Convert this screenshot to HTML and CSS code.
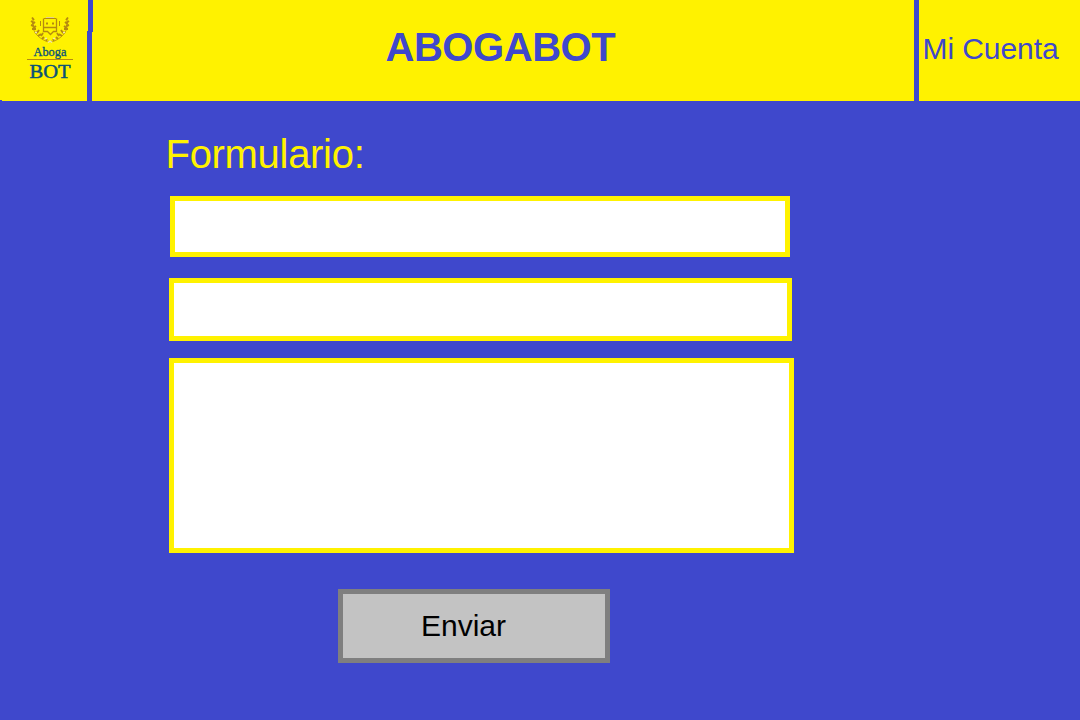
FILE: index.html
```html
<!DOCTYPE html>
<html lang="es">
<head>
<meta charset="utf-8">
<title>Abogabot</title>
<link rel="stylesheet" href="styles.css">
</head>
<body>
<header class="header">
  <a class="brand">
    <svg class="logo" width="50" height="68" viewBox="25 14 50 68">
      <g fill="none" stroke="#b58a10" stroke-width="1">
        <path d="M43.500 18.500V31.500H47.500L50.500 34.500L53.500 31.500H56.500V18.500M43.500 27.500H56.500" stroke-width="1.300"/>
        <path d="M40.500 21V26M59.500 21V26"/>
        <path d="M44 18.500H56"/>
        <path d="M46 17.500H54" stroke="#e2cf90"/>
        <path d="M46 23.500H48M52 23.500H54" stroke-width="1.800"/>
        <path d="M33 19Q31 31 39 37T49 41M67 19Q69 31 61 37T51 41" opacity=".75"/>
        <path d="M32 17.500L34 20M31 21L34 23M31 25L34 26M32 29L36 29M35 33L38 32M38 36L41 34M42 39L44 37M46 41L47 39M35 22L32.500 24M36 26L33.500 28M39 30L37 33M43 33L41 36M68 17.500L66 20M69 21L66 23M69 25L66 26M68 29L64 29M65 33L62 32M62 36L59 34M58 39L56 37M54 41L53 39M65 22L67.500 24M64 26L66.500 28M61 30L63 33M57 33L59 36" stroke-width="1.900"/>
        <path d="M48 42.500L50 41L52 42.500M35 32.500H37M63 32.500H65M45 38.500H47M53 38.500H55" stroke="#f0e3b0" stroke-width="1.300"/>
      </g>
      <text class="logo-small" x="33.500" y="55.500" textLength="33" lengthAdjust="spacingAndGlyphs">Aboga</text>
      <path d="M27 59.500H73" stroke="#b58a10"/>
      <text class="logo-large" x="29.500" y="77.500" textLength="41" lengthAdjust="spacingAndGlyphs">BOT</text>
    </svg>
  </a>
  <div class="divider"><i class="divider-top"></i><i class="divider-bottom"></i></div>
  <h1 class="title">ABOGABOT</h1>
  <a class="account">Mi Cuenta</a>
</header>
<main class="form">
  <h2 class="heading">Formulario:</h2>
  <div class="field field-first"></div>
  <div class="field field-second"></div>
  <div class="field field-message"></div>
  <div class="submit">Enviar</div>
</main>
</body>
</html>
```
FILE: styles.css
```css
* { box-sizing: border-box; }
body {
  margin: 0;
  height: 720px;
  overflow: hidden;
  background: #3f48cc;
  font-family: "Liberation Sans", Arial, sans-serif;
}
.header {
  display: flex;
  height: 101px;
  background: #fff200;
  color: #3f48cc;
}
.brand {
  width: 87px;
  padding: 14px 0 0 25px;
  background: linear-gradient(#3f48cc, #3f48cc) 0 100% / 2px 1px no-repeat;
}
.logo { display: block; }
.logo-small { font: 12px "Liberation Serif", serif; fill: #0a5278; stroke: #0a5278; stroke-width: .3; }
.logo-large { font: 19px "Liberation Serif", serif; fill: #0a5278; stroke: #0a5278; stroke-width: .5; }
.divider { width: 6px; display: flex; flex-direction: column; }
.divider-top { width: 5px; height: 32px; margin-left: 1px; background: #3f48cc; }
.divider-bottom { width: 5px; flex: 1; margin-top: -1px; background: #3f48cc; }
.title {
  width: 821px;
  margin: 0;
  padding: 24px 0 0 292.5px;
  font-size: 40px;
  line-height: 46px;
  letter-spacing: -.45px;
}
.account {
  flex: 1;
  padding: 32px 0 0 3.5px;
  border-left: 5px solid #3f48cc;
  font-size: 30px;
  line-height: 34px;
  letter-spacing: -.08px;
  white-space: nowrap;
}
.form { display: flex; flex-direction: column; align-items: flex-start; padding: 30px 0 0 169px; }
.heading {
  margin: 0 0 19px -3.5px;
  font-size: 40px;
  font-weight: 400;
  line-height: 46px;
  letter-spacing: -.3px;
  color: #fff200;
}
.field { background: #fff; border: 5px solid #fff200; }
.field-first { width: 620px; height: 61px; margin-left: 1px; }
.field-second { width: 623px; height: 63px; margin-top: 21px; }
.field-message { width: 625px; height: 195px; margin-top: 17px; }
.submit {
  width: 272px;
  height: 74px;
  margin: 36px 0 0 169px;
  padding: 15px 0 0 78px;
  border: 5px solid #7f7f7f;
  background: #c3c3c3;
  color: #000;
  font-size: 30px;
  line-height: 34px;
}
```
